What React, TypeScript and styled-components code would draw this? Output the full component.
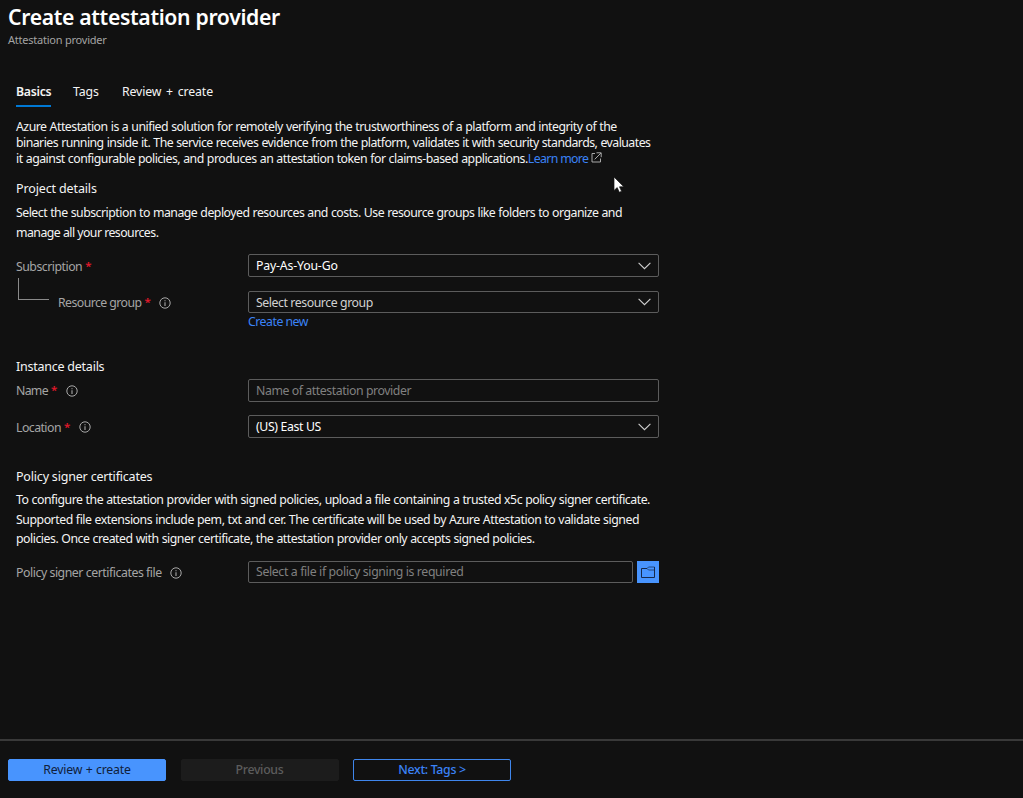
import React from "react";
import styled, { createGlobalStyle } from "styled-components";

const GlobalStyle = createGlobalStyle`
  * { box-sizing: border-box; }
  html, body { margin: 0; background: #111111; }
  body { font-family: "Noto Sans", "Open Sans", sans-serif; font-size: 12.3px; color: #f4f4f4; overflow: hidden; }
  h1, h2, p { margin: 0; font-weight: 400; }
  button, input { font: inherit; }
`;

const Page = styled.div`
  height: 798px;
  width: 1023px;
  display: flex;
  flex-direction: column;
  position: relative;
`;

const Fit = styled.span<{ $ls?: number; $ws?: number }>`
  letter-spacing: ${(p) => p.$ls ?? -0.3}px;
  word-spacing: ${(p) => p.$ws ?? 0}px;
  white-space: nowrap;
`;

const Header = styled.header`
  height: 80px;
  padding: 3px 8px 0;
`;
const Title = styled.h1`
  font-size: 21.2px;
  font-weight: 600;
  line-height: 28px;
  color: #ffffff;
`;
const Subtitle = styled.p`
  font-size: 11px;
  line-height: 18px;
  color: #a3a3a3;
`;

const Tabs = styled.nav`
  height: 39px;
  padding-left: 16px;
  display: flex;
  gap: 22px;
`;
const Tab = styled.a<{ $active?: boolean; $w: number }>`
  width: ${(p) => p.$w}px;
  height: 27px;
  line-height: 23px;
  white-space: nowrap;
  font-weight: ${(p) => (p.$active ? 600 : 400)};
  border-bottom: 2px solid ${(p) => (p.$active ? "#0078d4" : "transparent")};
`;

const Form = styled.main`
  flex: 1;
  padding-left: 16px;
  width: 659px;
`;
const Paragraph = styled.p<{ $lh: number }>`
  display: flex;
  flex-direction: column;
  line-height: ${(p) => p.$lh}px;
`;
const Line = styled.span`
  display: flex;
  align-items: center;
`;
const Heading = styled.h2<{ $top: number; $bottom: number }>`
  font-size: 12.5px;
  line-height: 20px;
  margin-top: ${(p) => p.$top}px;
  margin-bottom: ${(p) => p.$bottom}px;
  color: #f4f4f4;
`;
const Link = styled.a`
  color: #3b83f7;
  white-space: nowrap;
`;
const Row = styled.div<{ $top: number }>`
  display: flex;
  height: 22px;
  margin-top: ${(p) => p.$top}px;
`;
const Label = styled.label<{ $drop?: number }>`
  width: 232px;
  flex: none;
  display: flex;
  align-items: center;
  padding-top: ${(p) => p.$drop ?? 2}px;
  color: #a5a5a5;
`;
const Branch = styled.span`
  width: 31px;
  height: 22px;
  margin: -27px 9px 0 2px;
  border-left: 1.5px solid #8a8a8a;
  border-bottom: 1px solid #8a8a8a;
`;
const Star = styled.span`
  color: #e0182a;
  margin: -2px 0 0 3px;
  font-size: 11.5px;
  font-weight: 600;
`;
const Field = styled.div<{ $tone?: string; $h?: number }>`
  flex: 1;
  height: ${(p) => p.$h ?? 23}px;
  border: 1px solid #5c5c5c;
  border-radius: 2px;
  padding: 0 7px;
  display: flex;
  align-items: center;
  justify-content: space-between;
  color: ${(p) => p.$tone ?? "#ffffff"};
`;
const Browse = styled.button`
  width: 22px;
  height: 22px;
  margin-left: 4px;
  padding: 0;
  border: 0;
  background: #4894fe;
  display: flex;
  align-items: center;
  justify-content: center;
`;
const BelowField = styled.div`
  margin-left: 232px;
  line-height: 18px;
`;

const Footer = styled.footer`
  height: 59px;
  border-top: 2px solid #393939;
  padding: 18px 8px 0;
  display: flex;
  gap: 14.5px;
`;
const tones = {
  primary: ["#4894fe", "#10203a", "#4894fe"],
  disabled: ["#1c1c1c", "#5c5c5c", "#1c1c1c"],
  outline: ["transparent", "#3b83f7", "#3f86ec"],
};
const Button = styled.button<{ $kind: keyof typeof tones }>`
  width: 158px;
  height: 22px;
  padding: 0;
  line-height: 20px;
  border-radius: 2px;
  font-weight: ${(p) => (p.$kind === "primary" ? 400 : 500)};
  background: ${(p) => tones[p.$kind][0]};
  color: ${(p) => tones[p.$kind][1]};
  border: 1px solid ${(p) => tones[p.$kind][2]};
`;

const InfoSvg = styled.svg`
  margin-left: 8.5px;
  flex: none;
`;
const Info = () => (
  <InfoSvg width="12" height="12" viewBox="0 0 12 12" fill="none" stroke="#a8a8a8">
    <circle cx="6" cy="6" r="5.2" strokeWidth="1" />
    <path d="M6 5.2V9M6 3.2V4.3" strokeWidth="1.1" />
  </InfoSvg>
);
const Chevron = () => (
  <svg width="13" height="8" viewBox="0 0 13 8" fill="none" stroke="#d0d0d0" strokeWidth="1.1">
    <path d="M0.6 0.9L6.5 6.7L12.4 0.9" />
  </svg>
);
const ExternalSvg = styled.svg`
  margin-left: 3px;
  margin-top: -3px;
`;
const External = () => (
  <ExternalSvg width="11" height="11" viewBox="0 0 11 11" fill="none" stroke="#a8a8a8">
    <path d="M4 1.5H1V10H9.5V6.5M5.5 0.8H10.2V5.2M10 1L3.7 7.3" />
  </ExternalSvg>
);
const Folder = () => (
  <svg width="16" height="12" viewBox="0 0 16 12" fill="none" stroke="#16294a">
    <path d="M14.5 1V11.5H1.5V2.5H7" />
    <path d="M7 2.5L8.5 1H14.5M7 2.5L8.5 4H14.5" strokeOpacity="0.7" />
  </svg>
);
const Pointer = styled.svg`
  position: absolute;
  left: 613px;
  top: 176px;
`;

export default function App() {
  return (
    <Page>
      <GlobalStyle />
      <Header>
        <Title><Fit $ls={-0.33}>Create attestation provider</Fit></Title>
        <Subtitle><Fit $ls={-0.23}>Attestation provider</Fit></Subtitle>
      </Header>
      <Tabs>
        <Tab $active $w={35}><Fit>Basics</Fit></Tab>
        <Tab $w={27}><Fit $ls={-0.1}>Tags</Fit></Tab>
        <Tab $w={92}><Fit $ls={-0.13} $ws={1.7}>Review + create</Fit></Tab>
      </Tabs>
      <Form>
        <Paragraph $lh={16}>
          <Line><Fit $ls={-0.5} $ws={0.38}>Azure Attestation is a unified solution for remotely verifying the trustworthiness of a platform and integrity of the</Fit></Line>
          <Line><Fit $ls={-0.53} $ws={0.41}>binaries running inside it. The service receives evidence from the platform, validates it with security standards, evaluates</Fit></Line>
          <Line>
            <Fit $ls={-0.49} $ws={0.38}>it against configurable policies, and produces an attestation token for claims-based applications.</Fit>
            <Link><Fit $ls={-0.63}>Learn more</Fit></Link>
            <External />
          </Line>
        </Paragraph>
        <Heading $top={12} $bottom={4}><Fit $ls={-0.13}>Project details</Fit></Heading>
        <Paragraph $lh={19.5}>
          <Line><Fit $ls={-0.5} $ws={0.33}>Select the subscription to manage deployed resources and costs. Use resource groups like folders to organize and</Fit></Line>
          <Line><Fit $ls={-0.53}>manage all your resources.</Fit></Line>
        </Paragraph>
        <Row $top={12}>
          <Label><Fit $ls={-0.5}>Subscription</Fit><Star>*</Star></Label>
          <Field><Fit $ls={-0.18}>Pay-As-You-Go</Fit><Chevron /></Field>
        </Row>
        <Row $top={15}>
          <Label $drop={1}><Branch /><Fit $ls={-0.57}>Resource group</Fit><Star>*</Star><Info /></Label>
          <Field $h={22} $tone="#d2d2d2"><Fit $ls={-0.43}>Select resource group</Fit><Chevron /></Field>
        </Row>
        <BelowField><Link><Fit $ls={-0.5}>Create new</Fit></Link></BelowField>
        <Heading $top={26} $bottom={2}><Fit $ls={-0.24}>Instance details</Fit></Heading>
        <Row $top={0}>
          <Label $drop={1}><Fit $ls={-0.7}>Name</Fit><Star>*</Star><Info /></Label>
          <Field $tone="#808080"><Fit $ls={-0.43}>Name of attestation provider</Fit></Field>
        </Row>
        <Row $top={14}>
          <Label><Fit $ls={-0.55}>Location</Fit><Star>*</Star><Info /></Label>
          <Field><Fit $ls={-0.36}>(US) East US</Fit><Chevron /></Field>
        </Row>
        <Heading $top={29.5} $bottom={3.5}><Fit $ls={-0.19}>Policy signer certificates</Fit></Heading>
        <Paragraph $lh={19.5}>
          <Line><Fit $ls={-0.48} $ws={0.36}>To configure the attestation provider with signed policies, upload a file containing a trusted x5c policy signer certificate.</Fit></Line>
          <Line><Fit $ls={-0.46} $ws={0.33}>Supported file extensions include pem, txt and cer. The certificate will be used by Azure Attestation to validate signed</Fit></Line>
          <Line><Fit $ls={-0.48} $ws={0.34}>policies. Once created with signer certificate, the attestation provider only accepts signed policies.</Fit></Line>
        </Paragraph>
        <Row $top={12}>
          <Label><Fit $ls={-0.45}>Policy signer certificates file</Fit><Info /></Label>
          <Field $h={22} $tone="#808080"><Fit $ls={-0.36}>Select a file if policy signing is required</Fit></Field>
          <Browse><Folder /></Browse>
        </Row>
      </Form>
      <Footer>
        <Button $kind="primary"><Fit $ls={-0.22} $ws={0.6}>Review + create</Fit></Button>
        <Button $kind="disabled"><Fit>Previous</Fit></Button>
        <Button $kind="outline"><Fit>Next: Tags &gt;</Fit></Button>
      </Footer>
      <Pointer width="12" height="18" viewBox="0 0 12 18">
        <path d="M1 1V14.5L4.2 11.6L6.3 16.3L8.6 15.3L6.5 10.8H10.8Z" fill="#fff" stroke="#111" strokeWidth="0.7" />
      </Pointer>
    </Page>
  );
}
